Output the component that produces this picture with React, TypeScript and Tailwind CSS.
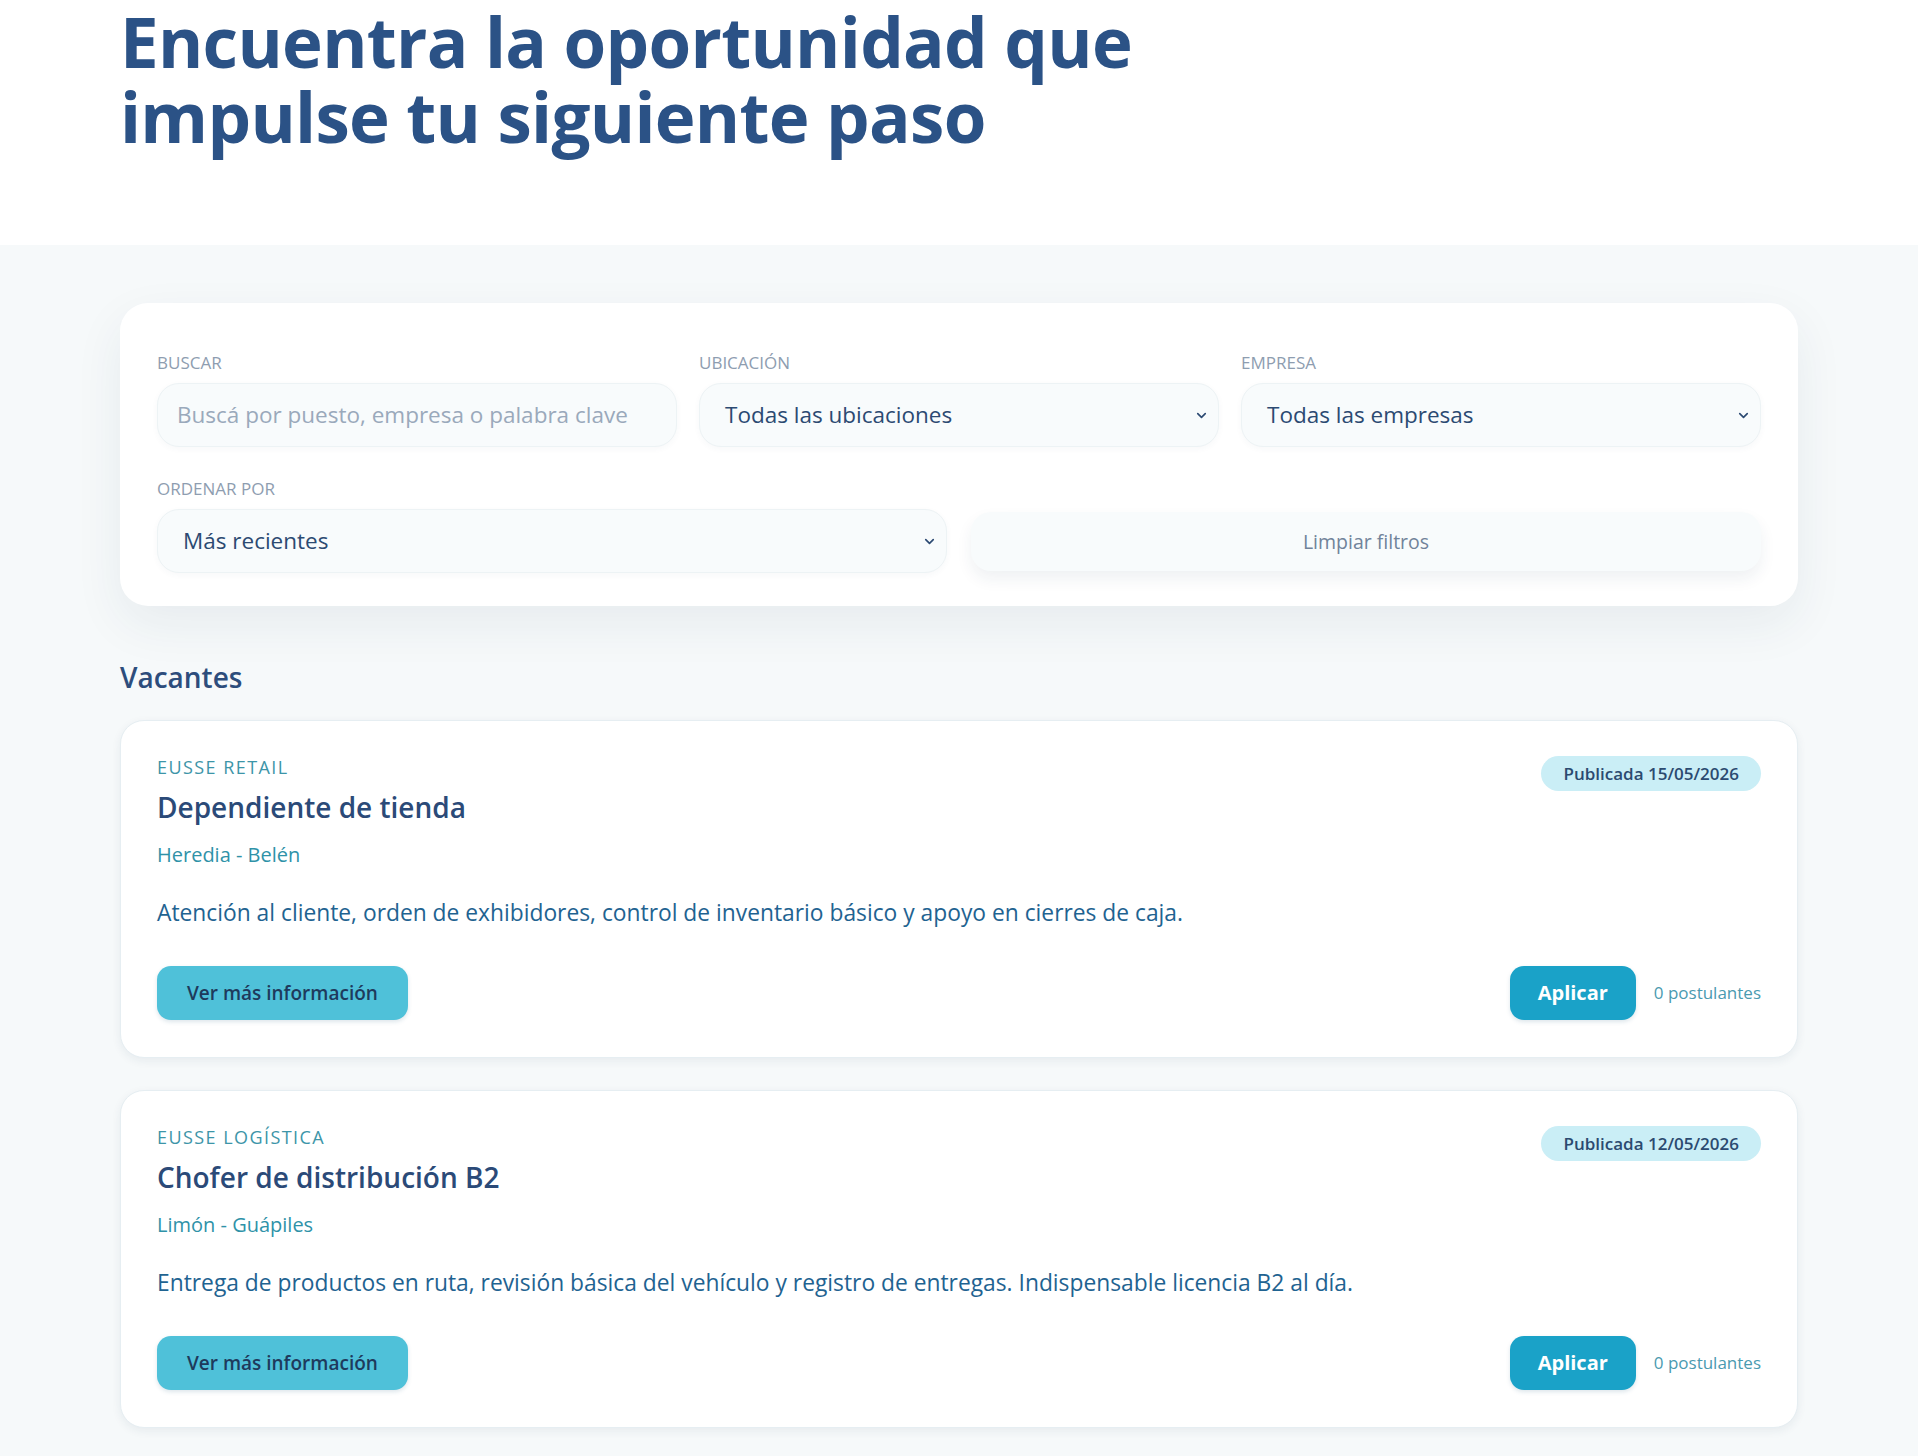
import { ChevronDown } from 'lucide-react';

const jobs = [
  {
    company: 'Eusse Retail',
    title: 'Dependiente de tienda',
    location: 'Heredia - Belén',
    date: '15/05/2026',
    description:
      'Atención al cliente, orden de exhibidores, control de inventario básico y apoyo en cierres de caja.',
    applicants: 0,
  },
  {
    company: 'Eusse Logística',
    title: 'Chofer de distribución B2',
    location: 'Limón - Guápiles',
    date: '12/05/2026',
    description:
      'Entrega de productos en ruta, revisión básica del vehículo y registro de entregas. Indispensable licencia B2 al día.',
    applicants: 0,
  },
];

function Field({ label, children }: { label: string; children: React.ReactNode }) {
  return (
    <div className="flex flex-col">
      <span className="mb-[8px] text-[17px] leading-[24px] uppercase text-[#8e9db0]">{label}</span>
      {children}
    </div>
  );
}

function SelectBox({ value }: { value: string }) {
  return (
    <div className="flex h-[64px] items-center justify-between rounded-[22px] border border-[#edf3f5] bg-[#f8fbfc] pl-[25px] pr-[9px] shadow-[0_2px_6px_rgba(40,80,110,0.04)]">
      <span className="text-[22.5px] text-[#2c4a72]">{value}</span>
      <ChevronDown size={15} strokeWidth={2.6} className="text-[#2c4a72]" />
    </div>
  );
}

function JobCard({ job }: { job: (typeof jobs)[number] }) {
  return (
    <div className="rounded-[24px] border border-[#e6eef2] bg-white px-9 pt-[34px] pb-[37px] shadow-[0_3px_10px_rgba(30,60,90,0.07)]">
      <div className="flex items-start justify-between">
        <div className="flex flex-col">
          <span className="text-[18px] leading-[24px] uppercase tracking-[0.08em] text-[#3d95a8]">
            {job.company}
          </span>
          <h3 className="mt-[8px] text-[28px] leading-[40px] font-semibold text-[#2b4a78]">{job.title}</h3>
          <span className="mt-[14px] text-[20px] leading-[28px] text-[#2f92a8]">{job.location}</span>
        </div>
        <span className="mt-px rounded-full bg-[#caeef6] px-[22px] py-[6px] text-[17px] leading-[23px] font-semibold text-[#2b4a70]">
          Publicada {job.date}
        </span>
      </div>
      <p className="mt-[28px] text-[22.8px] leading-[32px] text-[#1f6391]">{job.description}</p>
      <div className="mt-[37px] flex items-center justify-between">
        <button className="h-[54px] rounded-[14px] bg-[#4fc1d9] px-[30px] text-[19px] font-semibold text-[#1e3a5c] shadow-[0_2px_4px_rgba(30,90,120,0.15)]">
          Ver más información
        </button>
        <div className="flex items-center gap-[18px]">
          <button className="h-[54px] w-[126px] rounded-[14px] bg-[#1aa2c8] text-[20px] font-bold text-white shadow-[0_2px_4px_rgba(30,90,120,0.15)]">
            Aplicar
          </button>
          <span className="text-[17px] text-[#4a9ab0]">{job.applicants} postulantes</span>
        </div>
      </div>
    </div>
  );
}

export default function App() {
  return (
    <div className="flex min-h-screen flex-col bg-[#f6f9fa] font-['Open_Sans',sans-serif]">
      <header className="h-[245px] bg-white px-[120px] pt-[4px]">
        <h1 className="text-[69px] leading-[75px] font-bold tracking-[-0.01em] text-[#2b5286]">
          Encuentra la oportunidad que
          <br />
          impulse tu siguiente paso
        </h1>
      </header>

      <main className="flex-1 px-[120px] pt-[58px] pb-[28px]">
        <section className="rounded-[28px] bg-white px-[37px] pt-[48px] pb-[33px] shadow-[0_18px_50px_rgba(30,60,90,0.07)]">
          <div className="grid grid-cols-3 gap-x-[22px]">
            <Field label="Buscar">
              <div className="flex h-[64px] items-center rounded-[22px] border border-[#edf3f5] bg-[#f8fbfc] px-[19px] shadow-[0_2px_6px_rgba(40,80,110,0.04)]">
                <input
                  placeholder="Buscá por puesto, empresa o palabra clave"
                  className="w-full bg-transparent text-[22.5px] text-[#2c4a72] outline-none placeholder:text-[#9aa9bb]"
                />
              </div>
            </Field>
            <Field label="Ubicación">
              <SelectBox value="Todas las ubicaciones" />
            </Field>
            <Field label="Empresa">
              <SelectBox value="Todas las empresas" />
            </Field>
          </div>
          <div className="mt-[30px] grid grid-cols-2 items-end gap-x-[24px]">
            <Field label="Ordenar por">
              <SelectBox value="Más recientes" />
            </Field>
            <button className="mb-[2px] h-[59px] rounded-[20px] bg-[#f8fbfc] text-[19.5px] text-[#71839a] shadow-[0_8px_16px_rgba(30,60,90,0.07)]">
              Limpiar filtros
            </button>
          </div>
        </section>

        <h2 className="mt-[53px] text-[28px] leading-[36px] font-semibold text-[#2d4d7c]">Vacantes</h2>

        <div className="mt-[25px] flex flex-col gap-[32px]">
          {jobs.map((job) => (
            <JobCard key={job.title} job={job} />
          ))}
        </div>
      </main>
    </div>
  );
}
